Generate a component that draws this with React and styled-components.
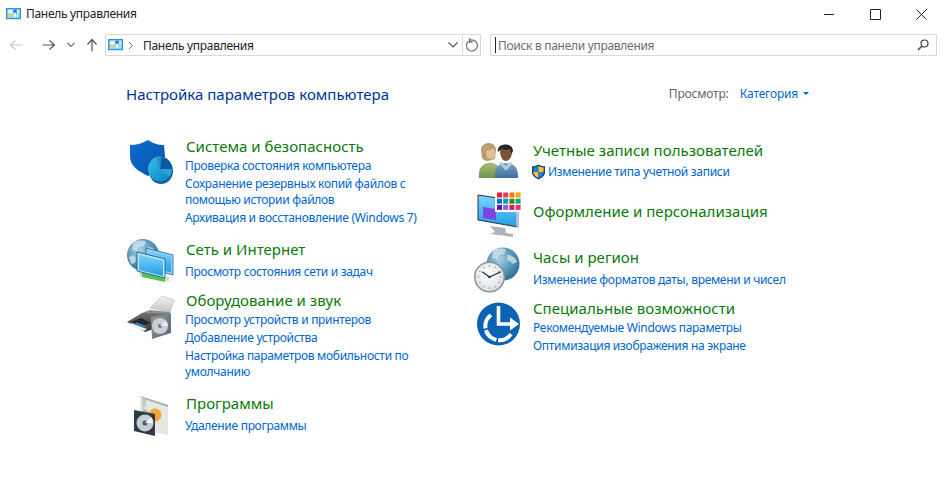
import React from "react";
import styled, { createGlobalStyle } from "styled-components";

const Global = createGlobalStyle`
  html, body { margin: 0; padding: 0; background: #fff; }
  * { box-sizing: border-box; }
`;
const FONT = `"Noto Sans", "Open Sans", sans-serif`;

const Page = styled.div`
  width: 944px; height: 494px; overflow: hidden; background: #fff;
  font-family: ${FONT}; font-size: 12px; color: #1a1a1a;
`;
const TitleBar = styled.header`
  height: 28px; display: flex; align-items: center; padding-left: 6px;
`;
const TitleText = styled.span`
  margin-left: 5px; font-size: 12px; line-height: 16px; color: #222; letter-spacing: -0.3px;
`;
const WindowButtons = styled.div`
  margin-left: auto; display: flex; align-items: center;
`;
const WinButton = styled.button`
  width: 46px; height: 28px; border: 0; padding: 0; background: none;
  display: flex; align-items: center; justify-content: center;
`;
const Toolbar = styled.nav`
  height: 22px; margin-top: 6px; display: flex; align-items: center; padding-left: 8px;
`;
const NavButton = styled.button`
  border: 0; padding: 0; background: none; display: flex; width: ${(p) => p.$w}px;
  margin-right: ${(p) => p.$mr || 0}px; justify-content: center;
`;
const AddressBox = styled.div`
  width: 376px; height: 22px; margin-left: 6px; border: 1px solid #d9d9d9;
  display: flex; align-items: center; padding-left: 2px;
`;
const CrumbSep = styled.span`
  margin-left: 5px; display: flex;
`;
const Crumb = styled.span`
  margin-left: 9px; font-size: 12px; color: #222; letter-spacing: -0.3px; flex: 1;
`;
const AddrEnd = styled.div`
  width: 18px; height: 20px; display: flex; align-items: center; justify-content: center;
  border-left: ${(p) => (p.$line ? "1px solid #d9d9d9" : "0")};
`;
const SearchBox = styled.div`
  width: 447px; height: 22px; margin-left: 9px; border: 1px solid #d9d9d9;
  display: flex; align-items: center; padding-left: 4px; padding-right: 7px;
`;
const Caret = styled.i`
  width: 1px; height: 16px; background: #222; margin-right: 2px;
`;
const SearchText = styled.span`
  flex: 1; font-size: 12px; color: #6d6d6d; letter-spacing: -0.3px;
`;
const Main = styled.main`
  padding-left: 126px;
`;
const HeadRow = styled.div`
  height: 20px; margin-top: 28px; display: flex; align-items: center;
`;
const Heading = styled.h1`
  margin: 0; font-size: 15px; font-weight: 400; color: #003399; line-height: 20px; letter-spacing: 0.01px;
`;
const ViewWrap = styled.div`
  margin-left: auto; margin-right: 135px; padding-bottom: 2px; display: flex; align-items: center;
`;
const ViewLabel = styled.span`
  color: #666; font-size: 12px; letter-spacing: -0.2px; width: 71px;
`;
const ViewValue = styled.span`
  color: #0066cc; font-size: 12px; letter-spacing: -0.2px;
`;
const Arrow = styled.i`
  margin-left: 5px; width: 0; height: 0; border: 3px solid transparent; border-top: 3px solid #0066cc;
  border-bottom: 0;
`;
const Columns = styled.div`
  display: grid; grid-template-columns: 349px 1fr; align-items: start;
`;
const Col = styled.div`
  display: flex; flex-direction: column; padding-top: ${(p) => p.$top}px;
`;
const Section = styled.section`
  display: grid; grid-template-columns: ${(p) => p.$iconW}px ${(p) => p.$textW}px; align-items: start;
  margin-top: ${(p) => p.$mt || 0}px;
`;
const IconSlot = styled.svg`
  width: 48px; height: 48px; display: block; overflow: visible;
`;
const Text = styled.div`
  padding-top: ${(p) => p.$pt || 0}px; display: flex; flex-direction: column;
`;
const Title = styled.a`
  font-size: 15px; line-height: 20px; color: #0a7a0a; letter-spacing: 0.02px;
  margin-bottom: ${(p) => p.$mb ?? 1}px; margin-left: ${(p) => p.$ml || 0}px;
`;
const LinkRow = styled.div`
  display: flex; align-items: center; margin-left: ${(p) => p.$ml || 0}px;
`;
const Link = styled.a`
  font-size: 12px; line-height: 16px; color: #0066cc; letter-spacing: -0.3px;
  padding-top: 1px; margin-bottom: 1px; height: 17px;
`;
const LinkLines = styled.a`
  font-size: 12px; line-height: 16px; color: #0066cc; letter-spacing: -0.3px;
  padding-top: 1px; margin-bottom: 1px; white-space: pre-line;
`;

const Cp = ({ size = 15 }) => (
  <svg width={size} height={size * 0.75} viewBox="0 0 20 15" style={{ display: "block" }}>
    <rect x="0" y="0" width="20" height="15" fill="#2f8fdc" />
    <rect x="1.5" y="1.5" width="17" height="12" fill="#7fd0f5" />
    <rect x="3" y="2.5" width="6" height="5" fill="#f2f8fb" />
    <rect x="10" y="2.5" width="4" height="4" fill="#1c6cb8" />
    <rect x="15" y="2.5" width="2.5" height="5" fill="#f7efc8" />
    <rect x="3" y="8.5" width="4.5" height="4" fill="#f6d04a" />
    <rect x="8.5" y="8.5" width="9" height="4" fill="#a9e2f5" />
    <rect x="11" y="6" width="2" height="5.5" fill="#fff" />
  </svg>
);

const Defs = () => (
  <svg width="0" height="0" style={{ position: "absolute" }}>
    <defs>
      <linearGradient id="shield" x1="0" y1="0" x2="1" y2="1">
        <stop offset="0" stopColor="#0f6fd0" /><stop offset="1" stopColor="#0450a8" />
      </linearGradient>
      <linearGradient id="pie" x1="0" y1="0" x2="1" y2="1">
        <stop offset="0" stopColor="#3cc0e8" /><stop offset="1" stopColor="#0c7cc4" />
      </linearGradient>
      <radialGradient id="globe" cx="0.4" cy="0.35" r="0.75">
        <stop offset="0" stopColor="#a9d2e4" /><stop offset="0.6" stopColor="#4f8fb2" /><stop offset="1" stopColor="#256488" />
      </radialGradient>
      <linearGradient id="screen" x1="0" y1="0" x2="0" y2="1">
        <stop offset="0" stopColor="#7fd3fa" /><stop offset="1" stopColor="#1f9ee6" />
      </linearGradient>
      <linearGradient id="metal" x1="0" y1="0" x2="1" y2="1">
        <stop offset="0" stopColor="#8f9aa5" /><stop offset="1" stopColor="#59636e" />
      </linearGradient>
      <linearGradient id="body" x1="0" y1="0" x2="0" y2="1">
        <stop offset="0" stopColor="#6f6f6f" /><stop offset="1" stopColor="#383838" />
      </linearGradient>
      <linearGradient id="paper" x1="0" y1="0" x2="0" y2="1">
        <stop offset="0" stopColor="#f2f2f2" /><stop offset="1" stopColor="#c4c4c4" />
      </linearGradient>
      <linearGradient id="skinA" x1="0" y1="0" x2="0" y2="1">
        <stop offset="0" stopColor="#a9c278" /><stop offset="1" stopColor="#6e934a" />
      </linearGradient>
      <linearGradient id="skinB" x1="0" y1="0" x2="0" y2="1">
        <stop offset="0" stopColor="#7ea3c8" /><stop offset="1" stopColor="#3f6d9c" />
      </linearGradient>
      <radialGradient id="clock" cx="0.45" cy="0.4" r="0.7">
        <stop offset="0" stopColor="#ffffff" /><stop offset="0.8" stopColor="#dfe3e6" /><stop offset="1" stopColor="#a7adb2" />
      </radialGradient>
    </defs>
  </svg>
);

const Continents = () => (
  <g fill="#cfe4ec" opacity="0.8">
    <path d="M-10 -12c4-3 10-3 13-1l-2 4-5 1-2 4-5-1z" />
    <path d="M5 -8c4 0 8 3 9 7l-4 2-3-3-3-1z" />
    <path d="M-14 2l4-2 3 3-1 5-4 1z" />
  </g>
);

const ShieldIcon = () => (
  <IconSlot viewBox="126 136 48 48">
    <path d="M148 140c4 3 10 5 16 5l1 12c0 10-8 14-17 19-9-5-18-9-18-20v-11c7 0 13-2 18-5z" fill="url(#shield)" />
    <ellipse cx="161" cy="171" rx="12" ry="13" fill="#0b5ea8" />
    <ellipse cx="160" cy="169" rx="12" ry="12.5" fill="url(#pie)" />
    <path d="M160 169l1-12c6 0 11 5 11 12z" fill="#0a5aa6" />
    <path d="M160 169l-4 -10c2-1 4-2 5-2z" fill="#2d8bd0" />
    <path d="M160 169l12 0c0 3-1 6-3 8z" fill="#2e9ed8" />
  </IconSlot>
);

const NetIcon = () => (
  <IconSlot viewBox="126 239 48 48">
    <circle cx="143" cy="255" r="16" fill="url(#globe)" />
    <g transform="translate(143 255)"><Continents /></g>
    <path d="M146 248l27 7v20l-27-7z" fill="#8fd6f8" stroke="#21628f" strokeWidth="0.8" />
    <path d="M148 250.5l23 6v16l-23-6z" fill="url(#screen)" />
    <path d="M142 272l23 5v5l-23-5z" fill="#59c24a" />
    <path d="M139 270l3 2v5l-3-2zM165 277l4-1v5l-4 1z" fill="#d8d8d8" />
    <path d="M137 252l28 7v19l-28-7z" fill="#bfe7fb" stroke="#1f5f8c" strokeWidth="0.9" />
    <path d="M139 254.5l24 6v15.5l-24-6z" fill="url(#screen)" />
  </IconSlot>
);

const PrinterIcon = () => (
  <IconSlot viewBox="126 290 48 48">
    <path d="M150 308l12-12 12 4-4 12z" fill="url(#paper)" stroke="#a8a8a8" strokeWidth="0.5" />
    <path d="M127 322l15-9 28 0v10l-25 9z" fill="url(#body)" />
    <path d="M142 313l8-3 20 2v2z" fill="#8a8a8a" />
    <path d="M131 322l11 4 9-3-10-5z" fill="#262626" />
    <path d="M131 323l16 6-3 2-15-6z" fill="#f1f1f1" />
    <path d="M134 323.5l10 4 3-1-10-4z" fill="#2f87c9" />
    <path d="M151 317l20-4v20l-19 6z" fill="url(#metal)" />
    <circle cx="160" cy="326" r="8" fill="#c8ced3" />
    <circle cx="160" cy="326" r="2" fill="#6f7a85" />
    <path d="M160 326l5.5-5.5a8 8 0 0 1 2.5 5.5z" fill="#e6e9eb" />
  </IconSlot>
);

const ProgIcon = () => (
  <IconSlot viewBox="126 393 48 48">
    <path d="M140 396l28 9v30l-28-6z" fill="#e4e7e2" />
    <path d="M140 396l4 3 24 8v-2z" fill="#a9aca8" />
    <path d="M142 399l4-1v8l-4 2z" fill="#c6c9c4" />
    <circle cx="155" cy="415" r="6.5" fill="#f3a53b" />
    <path d="M143 408l6 4 1 9-8-2z" fill="#9bc59a" />
    <path d="M134 410l21 4v22l-21-5z" fill="#2e3a48" />
    <circle cx="145" cy="423" r="8.5" fill="#c7cdd0" />
    <circle cx="145" cy="423" r="2.5" fill="#4c5a66" />
    <path d="M145 423l6-6a8.5 8.5 0 0 1 2 6z" fill="#eef1f2" />
  </IconSlot>
);

const PeopleIcon = () => (
  <IconSlot viewBox="475 140 48 48">
    <path d="M479 178c0-2-.5-8 2-11 2.500-3 6-4 9-4.500 4 .5 8 2 10 6v9.500z" fill="url(#skinA)" />
    <path d="M481 150c0-5 4-7 8-7 4 0 7 3 7 7l-1 9-7 2c-3 0-5-1-6-3 0-3-1-5-1-8z" fill="#b8a06c" />
    <path d="M486 151c3 0 6-2 7-3 1.500 2 2 4 2 6 0 3-2 5-4.500 5s-4.500-3-4.500-8z" fill="#e9bd9c" />
    <path d="M495 178c0-5 0-9 3-12 2-2 5-3 7-3 4 0 8 1 10.500 4 2.500 3 2.500 7 2.500 11z" fill="url(#skinB)" />
    <path d="M500 150c0-1 2-3 6-3 3 0 6 2 6 5 0 4-2.500 9-6 9-4 0-6-5-6-11z" fill="#7d5237" />
    <path d="M498 152c-1-5 3-7.500 7.500-7.500 5 0 7.500 3 7.500 6.500l-1.500 3c0-2-1-4-2-5-2 1-6 1-8 0-1 1-2.500 2-3.500 3z" fill="#25262c" />
    <path d="M501 162l5 4 5-4 2 1-6 7h-2l-6-7z" fill="#b3cde3" />
  </IconSlot>
);

const PALETTE = ["#e41f3a", "#e8384f", "#ee7b1d", "#f5a800", "#0a6fc2", "#0099bc", "#4c7d0c", "#00b274", "#5a17b5", "#8e62c6", "#c4207d", "#e03575"];

const PersonalIcon = () => (
  <IconSlot viewBox="475 190 48 48">
    <path d="M490 226l15 2 1 5 7 1v3l-23-3 5-2z" fill="#aeb4ba" />
    <path d="M478 195l40 6v26l-40-7z" fill="url(#screen)" stroke="#26323c" strokeWidth="1" />
    <path d="M483 207l13 2v11l-13-2z" fill="#7b45e0" />
    <path d="M516.500 201l2 .5v26l-2-.5z" fill="#ccd2d8" />
    <rect x="495" y="191" width="27" height="21" fill="#fff" />
    {PALETTE.map((c, i) => (
      <rect key={i} x={497 + (i % 4) * 6.2} y={192.5 + Math.floor(i / 4) * 6.2} width="5" height="5" fill={c} />
    ))}
  </IconSlot>
);

const ClockIcon = () => (
  <IconSlot viewBox="475 247 48 48">
    <circle cx="503" cy="264" r="16.5" fill="url(#globe)" />
    <g transform="translate(503 263)"><Continents /></g>
    <circle cx="489.500" cy="277" r="15.500" fill="#8c9297" />
    <circle cx="489.500" cy="277" r="14" fill="url(#clock)" />
    {[0, 30, 60, 90, 120, 150, 180, 210, 240, 270, 300, 330].map((a) => (
      <rect key={a} x="489.100" y="265" width="0.8" height="1.8" fill="#777" transform={`rotate(${a} 489.5 277)`} />
    ))}
    <path d="M489.500 277l-7-5M489.500 277l11-5" stroke="#222" strokeWidth="1.1" fill="none" strokeLinecap="round" />
    <circle cx="489.500" cy="277" r="1.2" fill="#222" />
  </IconSlot>
);

const AccessIcon = () => (
  <IconSlot viewBox="475 298 48 48">
    <circle cx="498.500" cy="324" r="21.500" fill="#0a63b5" />
    <path d="M491 315a14 14 0 1 0 20 19" fill="none" stroke="#fff" strokeWidth="4" strokeDasharray="15 1.8" />
    <path d="M498.500 306v18h12" fill="none" stroke="#fff" strokeWidth="3.6" />
    <path d="M510 317.500l9 6.500-9 6.500z" fill="#fff" />
  </IconSlot>
);

const UacIcon = () => (
  <svg width="15" height="16" viewBox="0 0 15 16" style={{ display: "block", marginRight: 2, flex: "none" }}>
    <path d="M7.5 0.5c2 1.2 4 1.8 6.5 1.8v6c0 3.4-3 5.5-6.5 7.2C4 13.8 1 11.7 1 8.3v-6c2.5 0 4.5-.6 6.5-1.8z" fill="#123f86" />
    <path d="M7.5 2v6H2.4V3.4c2 0 3.6-.5 5.1-1.4z" fill="#2a7ed3" />
    <path d="M7.5 2c1.5.9 3.1 1.4 5.1 1.4V8H7.5z" fill="#f7c52c" />
    <path d="M2.4 8h5.1v6c-2.7-1.3-5.1-3-5.1-5.7z" fill="#f7c52c" />
    <path d="M7.5 8h5.1v.3c0 2.7-2.4 4.4-5.1 5.7z" fill="#2a7ed3" />
  </svg>
);

const Ic = ({ d, w = 14, h = 14, vb, stroke = "#555", sw = 1.2 }) => (
  <svg width={w} height={h} viewBox={vb || `0 0 ${w} ${h}`} style={{ display: "block" }}>
    <path d={d} fill="none" stroke={stroke} strokeWidth={sw} />
  </svg>
);

export default function App() {
  return (
    <Page>
      <Global />
      <Defs />
      <TitleBar>
        <Cp />
        <TitleText>Панель управления</TitleText>
        <WindowButtons>
          <WinButton><Ic w={10} h={10} d="M0 5.5h10" stroke="#222" sw={1} /></WinButton>
          <WinButton><Ic w={11} h={11} d="M.5.5h10v10H.5z" stroke="#222" sw={1} /></WinButton>
          <WinButton><Ic w={11} h={11} d="M.5.5l10 10M10.5.5l-10 10" stroke="#222" sw={1} /></WinButton>
        </WindowButtons>
      </TitleBar>
      <Toolbar>
        <NavButton $w={16} $mr={17}><Ic d="M13.5 7H1.5M6.5 2.5L1.500 7l5 4.500" stroke="#c8c8c8" /></NavButton>
        <NavButton $w={16} $mr={9}><Ic d="M.5 7h12M7.5 2.5l5 4.500-5 4.500" stroke="#555" /></NavButton>
        <NavButton $w={10} $mr={9}><Ic w={8} h={6} d="M.5 1L4 4.500 7.500 1" stroke="#777" /></NavButton>
        <NavButton $w={14}><Ic d="M7 13.500V1.500M2.500 6.500L7 1.500l4.500 5" stroke="#555" /></NavButton>
        <AddressBox>
          <Cp />
          <CrumbSep><Ic w={6} h={9} d="M1 1l3.500 3.500L1 8" stroke="#777" sw={1} /></CrumbSep>
          <Crumb>Панель управления</Crumb>
          <AddrEnd><Ic w={10} h={6} d="M.5.5L5 5 9.500.5" stroke="#555" /></AddrEnd>
          <AddrEnd $line><Ic d="M3.500 3.200A5.500 5.500 0 1 0 7 2h-2.500M4.500 0v4h3" stroke="#777" sw={1.3} /></AddrEnd>
        </AddressBox>
        <SearchBox>
          <Caret />
          <SearchText>Поиск в панели управления</SearchText>
          <svg width="12" height="12" viewBox="0 0 12 12" style={{ display: "block" }}>
            <circle cx="7.500" cy="4.500" r="3.500" fill="none" stroke="#444" strokeWidth="1.2" />
            <path d="M5 7l-4 4" stroke="#444" strokeWidth="1.6" />
          </svg>
        </SearchBox>
      </Toolbar>
      <Main>
        <HeadRow>
          <Heading>Настройка параметров компьютера</Heading>
          <ViewWrap>
            <ViewLabel>Просмотр:</ViewLabel>
            <ViewValue>Категория</ViewValue>
            <Arrow />
          </ViewWrap>
        </HeadRow>
        <Columns>
          <Col $top={32}>
            <Section $iconW={59} $textW={236}>
              <ShieldIcon />
              <Text>
                <Title $ml={1}>Система и безопасность</Title>
                <Link>Проверка состояния компьютера</Link>
                <LinkLines>{"Сохранение резервных копий файлов с\nпомощью истории файлов"}</LinkLines>
                <Link>Архивация и восстановление (Windows 7)</Link>
              </Text>
            </Section>
            <Section $iconW={59} $textW={236} $mt={12}>
              <NetIcon />
              <Text>
                <Title $mb={4} $ml={1}>Сеть и Интернет</Title>
                <Link>Просмотр состояния сети и задач</Link>
              </Text>
            </Section>
            <Section $iconW={59} $textW={236} $mt={3}>
              <PrinterIcon />
              <Text>
                <Title $ml={1}>Оборудование и звук</Title>
                <Link>Просмотр устройств и принтеров</Link>
                <Link>Добавление устройства</Link>
                <LinkLines>{"Настройка параметров мобильности по\nумолчанию"}</LinkLines>
              </Text>
            </Section>
            <Section $iconW={59} $textW={236} $mt={12}>
              <ProgIcon />
              <Text>
                <Title $mb={4} $ml={1}>Программы</Title>
                <Link>Удаление программы</Link>
              </Text>
            </Section>
          </Col>
          <Col $top={36}>
            <Section $iconW={58} $textW={300}>
              <PeopleIcon />
              <Text>
                <Title $mb={3}>Учетные записи пользователей</Title>
                <LinkRow $ml={-2}>
                  <UacIcon />
                  <Link>Изменение типа учетной записи</Link>
                </LinkRow>
              </Text>
            </Section>
            <Section $iconW={58} $textW={300} $mt={2}>
              <PersonalIcon />
              <Text $pt={11}>
                <Title>Оформление и персонализация</Title>
              </Text>
            </Section>
            <Section $iconW={58} $textW={300} $mt={9}>
              <ClockIcon />
              <Text>
                <Title $mb={4}>Часы и регион</Title>
                <Link>Изменение форматов даты, времени и чисел</Link>
              </Text>
            </Section>
            <Section $iconW={58} $textW={300} $mt={3}>
              <AccessIcon />
              <Text>
                <Title>Специальные возможности</Title>
                <Link>Рекомендуемые Windows параметры</Link>
                <Link>Оптимизация изображения на экране</Link>
              </Text>
            </Section>
          </Col>
        </Columns>
      </Main>
    </Page>
  );
}
